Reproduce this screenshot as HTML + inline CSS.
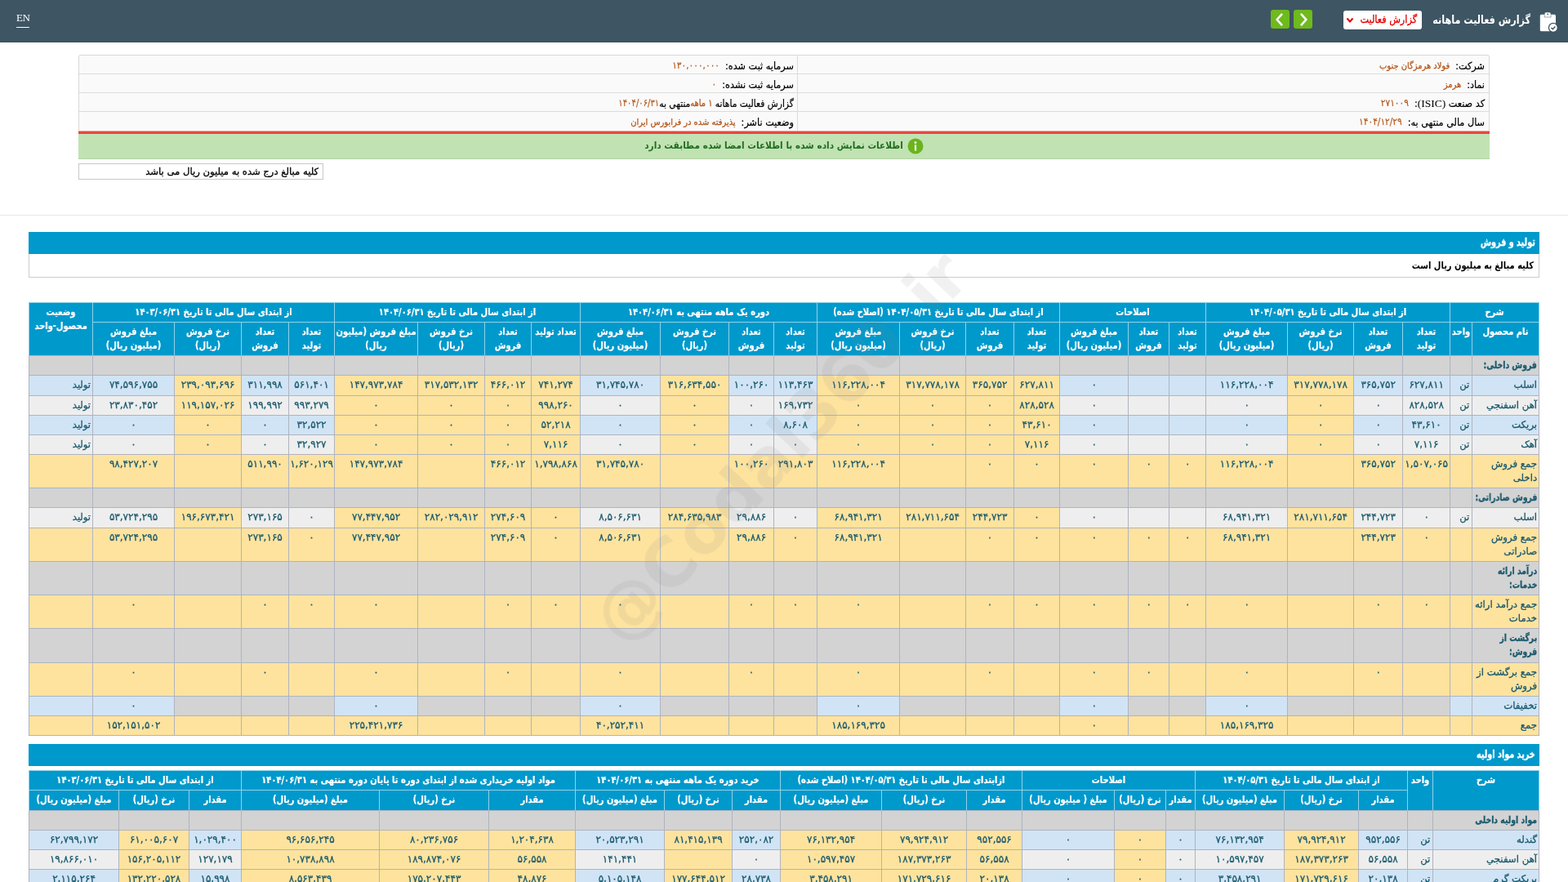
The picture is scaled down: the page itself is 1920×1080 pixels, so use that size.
<!DOCTYPE html>
<html lang="fa" dir="rtl">
<head>
<meta charset="utf-8">
<title>گزارش فعالیت ماهانه</title>
<style>
html,body{margin:0;padding:0;}
body{width:1920px;height:1080px;overflow:hidden;position:relative;background:#fff;
  font-family:"DejaVu Sans","Liberation Sans",sans-serif;font-size:12px;color:#000;direction:rtl;}
#page{position:absolute;left:0;top:0;width:1920px;height:1080px;overflow:hidden;will-change:transform;}
.hdr{position:absolute;left:0;top:0;width:1920px;height:52px;background:#3e5564;}
.en{position:absolute;left:20px;top:13px;width:16px;height:20px;border-bottom:1px solid #fff;color:#fff;
  font-family:"Liberation Serif",serif;font-size:13px;line-height:17px;direction:ltr;text-align:left;letter-spacing:-0.5px;}
.ttl{position:absolute;left:1752px;width:122px;text-align:right;top:11px;height:26px;line-height:26px;color:#fff;font-weight:bold;
  font-family:"DejaVu Sans Condensed","DejaVu Sans",sans-serif;font-size:14px;white-space:nowrap;transform:scaleX(0.89);transform-origin:right center;}
.ico{position:absolute;left:1884px;top:13px;width:26px;height:28px;}
.sel{position:absolute;left:1645px;top:13px;width:96px;height:23px;background:#fff;border-radius:3px;color:#e60000;
  font-family:"DejaVu Sans Condensed","DejaVu Sans",sans-serif;font-size:12.5px;line-height:22px;box-sizing:border-box;padding-right:6px;white-space:nowrap;-webkit-text-stroke:0.3px currentColor;}
.sel svg{position:absolute;left:3px;top:8px;}
.nav{position:absolute;top:12px;width:23px;height:23px;background:#6fba1c;border-radius:3px;}
.nav svg{position:absolute;left:0;top:0;}
.info{position:absolute;left:96px;top:67px;width:1728px;height:94px;box-sizing:border-box;border:1px solid #d9d9d9;border-bottom:0;
  border-radius:3px 3px 0 0;background:#fafafa;}
.info .r{position:absolute;left:0;width:1726px;height:23px;box-sizing:border-box;border-bottom:1px solid #dcdcdc;}
.info .c{position:absolute;top:2px;height:22px;line-height:22px;white-space:nowrap;font-family:"DejaVu Sans Condensed","DejaVu Sans",sans-serif;
  font-size:12.5px;color:#000;-webkit-text-stroke:0.2px currentColor;transform-origin:right center;}
.info .c1{right:5px;}
.info .c2{right:851px;}
.info .dv{position:absolute;left:879px;top:0;width:1px;height:93px;background:#dcdcdc;}
.info .v{color:#b3561a;font-size:11px;margin-right:7px;position:relative;top:-1px;-webkit-text-stroke:0.25px currentColor;}
.info .vd{font-size:11.75px;-webkit-text-stroke:0.15px currentColor;}
.info .lat{font-family:"Liberation Serif",serif;font-size:13.5px;-webkit-text-stroke:0;}
.red{position:absolute;left:96px;top:160px;width:1728px;height:4px;background:#e8473f;border-top:1px solid #f0a29d;box-sizing:border-box;}
.ok{position:absolute;left:96px;top:164px;width:1728px;height:31px;background:#c1e2b3;box-sizing:border-box;
  border-bottom:1px solid #b5d3a8;text-align:center;color:#1f6f1f;font-weight:bold;
  font-family:"DejaVu Sans Condensed","DejaVu Sans",sans-serif;font-size:11.75px;line-height:28px;white-space:nowrap;}
.note{position:absolute;left:96px;top:200px;width:300px;height:20px;box-sizing:border-box;border:1px solid #c8c8c8;
  background:#fff;font-size:11.6px;line-height:19px;padding-right:5px;white-space:nowrap;-webkit-text-stroke:0.3px currentColor;}
.hr{position:absolute;left:0;top:263px;width:1920px;height:1px;background:#e7e7e7;}
.bar{position:absolute;left:35px;width:1850px;height:27px;background:#0099cc;color:#fff;font-weight:bold;
  font-family:"DejaVu Sans Condensed","DejaVu Sans",sans-serif;font-size:13.4px;line-height:26px;box-sizing:border-box;
  padding-right:5px;white-space:nowrap;-webkit-text-stroke:0.3px currentColor;}
.sx{display:inline-block;transform-origin:right center;transform:scaleX(0.8);}
.sub .sx{transform:scaleX(0.915);}
.sub{position:absolute;left:35px;top:311px;width:1850px;height:29px;box-sizing:border-box;border:1px solid #ccc;border-top:0;
  background:#fff;font-weight:bold;font-family:"DejaVu Sans Condensed","DejaVu Sans",sans-serif;font-size:12px;
  line-height:28px;padding-right:6px;white-space:nowrap;}
table.rep{position:absolute;border-collapse:separate;border-spacing:0;table-layout:fixed;direction:rtl;
  border-bottom:1px solid #b0b3c0;}
table.rep .fr{border-right:1px solid #b0b3c0;}
table.rep th.fr{border-right-color:#8fd3ea;}
table.rep td,table.rep th{box-sizing:border-box;padding:3px 0 0 0;border-left:1px solid #b0b3c0;border-top:1px solid #b0b3c0;
  vertical-align:top;text-align:center;white-space:nowrap;overflow:hidden;line-height:17px;font-size:12px;color:#1b5a6e;
  font-weight:normal;-webkit-text-stroke:0.3px currentColor;}
table.rep th{background:#0099cc;color:#fff;font-weight:bold;border-color:#8fd3ea;
  font-family:"DejaVu Sans Condensed","DejaVu Sans",sans-serif;font-size:12px;-webkit-text-stroke:0.2px currentColor;}
.hx{display:block;margin:0 -30px;transform:scaleX(0.92);transform-origin:center center;}
.bx{display:inline-block;transform:scaleX(0.86);transform-origin:right center;}
table.rep td.n{text-align:right;padding-right:2px;font-size:11.75px;}
table.rep td.u{text-align:right;padding-right:3px;font-size:11.5px;}
table.rep td.s{text-align:right;padding-right:2px;font-size:11.5px;}
table.rep td.b{font-weight:bold;font-family:"DejaVu Sans Condensed","DejaVu Sans",sans-serif;font-size:12px;-webkit-text-stroke:0.3px currentColor;}
#t1 tr.r1 th{padding-top:3px;}
td.a{background:#d0e4f5;}
td.e{background:#eeeeee;}
td.y{background:#fee39e;}
td.g{background:#d3d3d3;}
.wm{position:absolute;left:956px;top:548px;white-space:nowrap;direction:ltr;pointer-events:none;line-height:1;
  transform:translate(-50%,-50%) rotate(-46.5deg);font-family:"DejaVu Sans","Liberation Sans",sans-serif;font-weight:bold;font-size:82px;
  color:rgba(128,128,128,0.115);}

</style>
</head>
<body>
<div id="page">
<div class="hdr">
  <div class="en">EN</div>
  <div class="nav" style="left:1556px"><svg width="23" height="23" viewBox="0 0 23 23"><path d="M13.4 5.6 L7.6 12 L13.4 18.4" fill="none" stroke="#fff" stroke-width="2.6" stroke-linecap="round" stroke-linejoin="round"/></svg></div>
  <div class="nav" style="left:1584px"><svg width="23" height="23" viewBox="0 0 23 23"><path d="M9.6 5.6 L15.4 12 L9.6 18.4" fill="none" stroke="#fff" stroke-width="2.6" stroke-linecap="round" stroke-linejoin="round"/></svg></div>
  <div class="sel">گزارش فعالیت<svg width="10" height="8" viewBox="0 0 10 8"><path d="M1.5 1.5 L5 5.5 L8.5 1.5" fill="none" stroke="#e60000" stroke-width="2"/></svg></div>
  <div class="ttl">گزارش فعالیت ماهانه</div>
  <svg class="ico" viewBox="0 0 26 28"><rect x="1.8" y="4.8" width="19.2" height="20.5" rx="1.6" fill="#fff"/><path d="M7.2 8V4.2a2.200 2.200 0 0 1 2.200-2.200h3.500a2.200 2.200 0 0 1 2.200 2.200V8z" fill="#fff" stroke="#3e5564" stroke-width="0.5"/><circle cx="11.15" cy="4.3" r="0.9" fill="#3e5564"/><circle cx="17.9" cy="20.9" r="6.1" fill="#3e5564"/><circle cx="17.900" cy="20.900" r="4.800" fill="#fff"/><path d="M15.500 21l1.800 1.700l3.100-3.300" fill="none" stroke="#3e5564" stroke-width="1.5"/></svg>
</div>
<div class="info">
<div class="r" style="top:0"><div class="c c1">شرکت:<span class="v">فولاد هرمزگان جنوب</span></div><div class="c c2">سرمایه ثبت شده:<span class="v vd">۱۳۰,۰۰۰,۰۰۰</span></div></div>
<div class="r" style="top:23px"><div class="c c1">نماد:<span class="v">هرمز</span></div><div class="c c2">سرمایه ثبت نشده:<span class="v vd">۰</span></div></div>
<div class="r" style="top:46px"><div class="c c1">کد صنعت <span class="lat">(ISIC)</span>:<span class="v vd">۲۷۱۰۰۹</span></div><div class="c c2" style="transform:scaleX(0.95)">گزارش فعالیت ماهانه <span class="v" style="margin:0;font-size:11.5px">۱ ماهه</span>&zwnj;منتهی به<span class="v vd" style="margin:0">۱۴۰۴/۰۶/۳۱</span></div></div>
<div class="r" style="top:69px;border-bottom:0"><div class="c c1">سال مالی منتهی به:<span class="v vd">۱۴۰۴/۱۲/۲۹</span></div><div class="c c2">وضعیت ناشر:<span class="v">پذیرفته شده در فرابورس ایران</span></div></div>
<div class="dv"></div>
</div>
<div class="red"></div>
<div class="ok"><svg width="20" height="20" viewBox="0 0 20 20" style="vertical-align:middle;margin-left:5px;position:relative;top:0px"><circle cx="10" cy="10" r="9.500" fill="#6ab41e"/><circle cx="10" cy="5.6" r="1.400" fill="#fff"/><rect x="8.9" y="8.200" width="2.2" height="7.4" rx="0.6" fill="#fff"/></svg>اطلاعات نمایش داده شده با اطلاعات امضا شده مطابقت دارد</div>
<div class="note">کلیه مبالغ درج شده به میلیون ریال می باشد</div>
<div class="hr"></div>
<div class="bar" style="top:284px"><span class="sx">تولید و فروش</span></div>
<div class="sub"><span class="sx">کلیه مبالغ به میلیون ریال است</span></div>

<table class="rep" id="t1" style="left:35px;top:370px;width:1850px">
<colgroup><col style="width:83px"><col style="width:27px"><col style="width:58px"><col style="width:60px"><col style="width:81px"><col style="width:100px"><col style="width:45px"><col style="width:50px"><col style="width:84px"><col style="width:56px"><col style="width:59px"><col style="width:81px"><col style="width:101px"><col style="width:53px"><col style="width:55px"><col style="width:84px"><col style="width:98px"><col style="width:60px"><col style="width:57px"><col style="width:82px"><col style="width:102px"><col style="width:56px"><col style="width:58px"><col style="width:82px"><col style="width:100px"><col style="width:78px"></colgroup>
<tr class="r0" style="height:24px">
<th colspan="2" class="fr"><span class="hx">شرح</span></th>
<th colspan="4"><span class="hx">از ابتدای سال مالی تا تاریخ ۱۴۰۴/۰۵/۳۱</span></th>
<th colspan="3"><span class="hx">اصلاحات</span></th>
<th colspan="4"><span class="hx">از ابتدای سال مالی تا تاریخ ۱۴۰۴/۰۵/۳۱ (اصلاح شده)</span></th>
<th colspan="4"><span class="hx">دوره یک ماهه منتهی به ۱۴۰۴/۰۶/۳۱</span></th>
<th colspan="4"><span class="hx">از ابتدای سال مالی تا تاریخ ۱۴۰۴/۰۶/۳۱</span></th>
<th colspan="4"><span class="hx">از ابتدای سال مالی تا تاریخ ۱۴۰۳/۰۶/۳۱</span></th>
<th rowspan="2"><span class="hx">وضعیت<br>محصول-واحد</span></th>
</tr>
<tr class="r1" style="height:41px">
<th class="fr"><span class="hx">نام محصول</span></th>
<th><span class="hx">واحد</span></th>
<th><span class="hx">تعداد<br>تولید</span></th>
<th><span class="hx">تعداد<br>فروش</span></th>
<th><span class="hx">نرخ فروش<br>(ریال)</span></th>
<th><span class="hx">مبلغ فروش<br>(میلیون ریال)</span></th>
<th><span class="hx">تعداد<br>تولید</span></th>
<th><span class="hx">تعداد<br>فروش</span></th>
<th><span class="hx">مبلغ فروش<br>(میلیون ریال)</span></th>
<th><span class="hx">تعداد<br>تولید</span></th>
<th><span class="hx">تعداد<br>فروش</span></th>
<th><span class="hx">نرخ فروش<br>(ریال)</span></th>
<th><span class="hx">مبلغ فروش<br>(میلیون ریال)</span></th>
<th><span class="hx">تعداد<br>تولید</span></th>
<th><span class="hx">تعداد<br>فروش</span></th>
<th><span class="hx">نرخ فروش<br>(ریال)</span></th>
<th><span class="hx">مبلغ فروش<br>(میلیون ریال)</span></th>
<th><span class="hx">تعداد تولید</span></th>
<th><span class="hx">تعداد<br>فروش</span></th>
<th><span class="hx">نرخ فروش<br>(ریال)</span></th>
<th><span class="hx">مبلغ فروش (میلیون<br>ریال)</span></th>
<th><span class="hx">تعداد<br>تولید</span></th>
<th><span class="hx">تعداد<br>فروش</span></th>
<th><span class="hx">نرخ فروش<br>(ریال)</span></th>
<th><span class="hx">مبلغ فروش<br>(میلیون ریال)</span></th>
</tr>
<tr class="r2" style="height:24px">
<td class="g n b fr"><span class="bx">فروش داخلی:</span></td>
<td class="g"></td>
<td class="g"></td>
<td class="g"></td>
<td class="g"></td>
<td class="g"></td>
<td class="g"></td>
<td class="g"></td>
<td class="g"></td>
<td class="g"></td>
<td class="g"></td>
<td class="g"></td>
<td class="g"></td>
<td class="g"></td>
<td class="g"></td>
<td class="g"></td>
<td class="g"></td>
<td class="g"></td>
<td class="g"></td>
<td class="g"></td>
<td class="g"></td>
<td class="g"></td>
<td class="g"></td>
<td class="g"></td>
<td class="g"></td>
<td class="g"></td>
</tr>
<tr class="r3" style="height:25px">
<td class="a n fr">اسلب</td>
<td class="a u">تن</td>
<td class="a">۶۲۷,۸۱۱</td>
<td class="a">۳۶۵,۷۵۲</td>
<td class="y">۳۱۷,۷۷۸,۱۷۸</td>
<td class="a">۱۱۶,۲۲۸,۰۰۴</td>
<td class="a"></td>
<td class="a"></td>
<td class="a">۰</td>
<td class="y">۶۲۷,۸۱۱</td>
<td class="y">۳۶۵,۷۵۲</td>
<td class="y">۳۱۷,۷۷۸,۱۷۸</td>
<td class="y">۱۱۶,۲۲۸,۰۰۴</td>
<td class="a">۱۱۳,۴۶۳</td>
<td class="a">۱۰۰,۲۶۰</td>
<td class="y">۳۱۶,۶۳۴,۵۵۰</td>
<td class="a">۳۱,۷۴۵,۷۸۰</td>
<td class="y">۷۴۱,۲۷۴</td>
<td class="y">۴۶۶,۰۱۲</td>
<td class="y">۳۱۷,۵۳۲,۱۳۲</td>
<td class="y">۱۴۷,۹۷۳,۷۸۴</td>
<td class="a">۵۶۱,۴۰۱</td>
<td class="a">۳۱۱,۹۹۸</td>
<td class="y">۲۳۹,۰۹۳,۶۹۶</td>
<td class="a">۷۴,۵۹۶,۷۵۵</td>
<td class="a s">تولید</td>
</tr>
<tr class="r4" style="height:24px">
<td class="e n fr">آهن اسفنجي</td>
<td class="e u">تن</td>
<td class="e">۸۲۸,۵۲۸</td>
<td class="e">۰</td>
<td class="y">۰</td>
<td class="e">۰</td>
<td class="e"></td>
<td class="e"></td>
<td class="e">۰</td>
<td class="y">۸۲۸,۵۲۸</td>
<td class="y">۰</td>
<td class="y">۰</td>
<td class="y">۰</td>
<td class="e">۱۶۹,۷۳۲</td>
<td class="e">۰</td>
<td class="y">۰</td>
<td class="e">۰</td>
<td class="y">۹۹۸,۲۶۰</td>
<td class="y">۰</td>
<td class="y">۰</td>
<td class="y">۰</td>
<td class="e">۹۹۳,۲۷۹</td>
<td class="e">۱۹۹,۹۹۲</td>
<td class="y">۱۱۹,۱۵۷,۰۲۶</td>
<td class="e">۲۳,۸۳۰,۴۵۲</td>
<td class="e s">تولید</td>
</tr>
<tr class="r5" style="height:24px">
<td class="a n fr">بریکت</td>
<td class="a u">تن</td>
<td class="a">۴۳,۶۱۰</td>
<td class="a">۰</td>
<td class="y">۰</td>
<td class="a">۰</td>
<td class="a"></td>
<td class="a"></td>
<td class="a">۰</td>
<td class="y">۴۳,۶۱۰</td>
<td class="y">۰</td>
<td class="y">۰</td>
<td class="y">۰</td>
<td class="a">۸,۶۰۸</td>
<td class="a">۰</td>
<td class="y">۰</td>
<td class="a">۰</td>
<td class="y">۵۲,۲۱۸</td>
<td class="y">۰</td>
<td class="y">۰</td>
<td class="y">۰</td>
<td class="a">۳۲,۵۲۲</td>
<td class="a">۰</td>
<td class="y">۰</td>
<td class="a">۰</td>
<td class="a s">تولید</td>
</tr>
<tr class="r6" style="height:24px">
<td class="e n fr">آهک</td>
<td class="e u">تن</td>
<td class="e">۷,۱۱۶</td>
<td class="e">۰</td>
<td class="y">۰</td>
<td class="e">۰</td>
<td class="e"></td>
<td class="e"></td>
<td class="e">۰</td>
<td class="y">۷,۱۱۶</td>
<td class="y">۰</td>
<td class="y">۰</td>
<td class="y">۰</td>
<td class="e">۰</td>
<td class="e">۰</td>
<td class="y">۰</td>
<td class="e">۰</td>
<td class="y">۷,۱۱۶</td>
<td class="y">۰</td>
<td class="y">۰</td>
<td class="y">۰</td>
<td class="e">۳۲,۹۲۷</td>
<td class="e">۰</td>
<td class="y">۰</td>
<td class="e">۰</td>
<td class="e s">تولید</td>
</tr>
<tr class="r7" style="height:41px">
<td class="y n fr">جمع فروش<br>داخلی</td>
<td class="y"></td>
<td class="y">۱,۵۰۷,۰۶۵</td>
<td class="y">۳۶۵,۷۵۲</td>
<td class="y"></td>
<td class="y">۱۱۶,۲۲۸,۰۰۴</td>
<td class="y">۰</td>
<td class="y">۰</td>
<td class="y">۰</td>
<td class="y">۰</td>
<td class="y">۰</td>
<td class="y"></td>
<td class="y">۱۱۶,۲۲۸,۰۰۴</td>
<td class="y">۲۹۱,۸۰۳</td>
<td class="y">۱۰۰,۲۶۰</td>
<td class="y"></td>
<td class="y">۳۱,۷۴۵,۷۸۰</td>
<td class="y">۱,۷۹۸,۸۶۸</td>
<td class="y">۴۶۶,۰۱۲</td>
<td class="y"></td>
<td class="y">۱۴۷,۹۷۳,۷۸۴</td>
<td class="y">۱,۶۲۰,۱۲۹</td>
<td class="y">۵۱۱,۹۹۰</td>
<td class="y"></td>
<td class="y">۹۸,۴۲۷,۲۰۷</td>
<td class="y"></td>
</tr>
<tr class="r8" style="height:24px">
<td class="g n b fr"><span class="bx">فروش صادراتی:</span></td>
<td class="g"></td>
<td class="g"></td>
<td class="g"></td>
<td class="g"></td>
<td class="g"></td>
<td class="g"></td>
<td class="g"></td>
<td class="g"></td>
<td class="g"></td>
<td class="g"></td>
<td class="g"></td>
<td class="g"></td>
<td class="g"></td>
<td class="g"></td>
<td class="g"></td>
<td class="g"></td>
<td class="g"></td>
<td class="g"></td>
<td class="g"></td>
<td class="g"></td>
<td class="g"></td>
<td class="g"></td>
<td class="g"></td>
<td class="g"></td>
<td class="g"></td>
</tr>
<tr class="r9" style="height:25px">
<td class="e n fr">اسلب</td>
<td class="e u">تن</td>
<td class="e">۰</td>
<td class="e">۲۴۴,۷۲۳</td>
<td class="y">۲۸۱,۷۱۱,۶۵۴</td>
<td class="e">۶۸,۹۴۱,۳۲۱</td>
<td class="e"></td>
<td class="e"></td>
<td class="e">۰</td>
<td class="y">۰</td>
<td class="y">۲۴۴,۷۲۳</td>
<td class="y">۲۸۱,۷۱۱,۶۵۴</td>
<td class="y">۶۸,۹۴۱,۳۲۱</td>
<td class="e">۰</td>
<td class="e">۲۹,۸۸۶</td>
<td class="y">۲۸۴,۶۳۵,۹۸۳</td>
<td class="e">۸,۵۰۶,۶۳۱</td>
<td class="y">۰</td>
<td class="y">۲۷۴,۶۰۹</td>
<td class="y">۲۸۲,۰۲۹,۹۱۲</td>
<td class="y">۷۷,۴۴۷,۹۵۲</td>
<td class="e">۰</td>
<td class="e">۲۷۳,۱۶۵</td>
<td class="y">۱۹۶,۶۷۳,۴۲۱</td>
<td class="e">۵۳,۷۲۴,۲۹۵</td>
<td class="e s">تولید</td>
</tr>
<tr class="r10" style="height:41px">
<td class="y n fr">جمع فروش<br>صادراتی</td>
<td class="y"></td>
<td class="y">۰</td>
<td class="y">۲۴۴,۷۲۳</td>
<td class="y"></td>
<td class="y">۶۸,۹۴۱,۳۲۱</td>
<td class="y">۰</td>
<td class="y">۰</td>
<td class="y">۰</td>
<td class="y">۰</td>
<td class="y">۰</td>
<td class="y"></td>
<td class="y">۶۸,۹۴۱,۳۲۱</td>
<td class="y">۰</td>
<td class="y">۲۹,۸۸۶</td>
<td class="y"></td>
<td class="y">۸,۵۰۶,۶۳۱</td>
<td class="y">۰</td>
<td class="y">۲۷۴,۶۰۹</td>
<td class="y"></td>
<td class="y">۷۷,۴۴۷,۹۵۲</td>
<td class="y">۰</td>
<td class="y">۲۷۳,۱۶۵</td>
<td class="y"></td>
<td class="y">۵۳,۷۲۴,۲۹۵</td>
<td class="y"></td>
</tr>
<tr class="r11" style="height:41px">
<td class="g n b fr"><span class="bx">درآمد ارائه<br>خدمات:</span></td>
<td class="g"></td>
<td class="g"></td>
<td class="g"></td>
<td class="g"></td>
<td class="g"></td>
<td class="g"></td>
<td class="g"></td>
<td class="g"></td>
<td class="g"></td>
<td class="g"></td>
<td class="g"></td>
<td class="g"></td>
<td class="g"></td>
<td class="g"></td>
<td class="g"></td>
<td class="g"></td>
<td class="g"></td>
<td class="g"></td>
<td class="g"></td>
<td class="g"></td>
<td class="g"></td>
<td class="g"></td>
<td class="g"></td>
<td class="g"></td>
<td class="g"></td>
</tr>
<tr class="r12" style="height:41px">
<td class="y n fr">جمع درآمد ارائه<br>خدمات</td>
<td class="y"></td>
<td class="y">۰</td>
<td class="y">۰</td>
<td class="y"></td>
<td class="y">۰</td>
<td class="y">۰</td>
<td class="y">۰</td>
<td class="y">۰</td>
<td class="y">۰</td>
<td class="y">۰</td>
<td class="y"></td>
<td class="y">۰</td>
<td class="y">۰</td>
<td class="y">۰</td>
<td class="y"></td>
<td class="y">۰</td>
<td class="y">۰</td>
<td class="y">۰</td>
<td class="y"></td>
<td class="y">۰</td>
<td class="y">۰</td>
<td class="y">۰</td>
<td class="y"></td>
<td class="y">۰</td>
<td class="y"></td>
</tr>
<tr class="r13" style="height:42px">
<td class="g n b fr"><span class="bx">برگشت از<br>فروش:</span></td>
<td class="g"></td>
<td class="g"></td>
<td class="g"></td>
<td class="g"></td>
<td class="g"></td>
<td class="g"></td>
<td class="g"></td>
<td class="g"></td>
<td class="g"></td>
<td class="g"></td>
<td class="g"></td>
<td class="g"></td>
<td class="g"></td>
<td class="g"></td>
<td class="g"></td>
<td class="g"></td>
<td class="g"></td>
<td class="g"></td>
<td class="g"></td>
<td class="g"></td>
<td class="g"></td>
<td class="g"></td>
<td class="g"></td>
<td class="g"></td>
<td class="g"></td>
</tr>
<tr class="r14" style="height:41px">
<td class="y n fr">جمع برگشت از<br>فروش</td>
<td class="y"></td>
<td class="y"></td>
<td class="y">۰</td>
<td class="y"></td>
<td class="y">۰</td>
<td class="y"></td>
<td class="y">۰</td>
<td class="y">۰</td>
<td class="y"></td>
<td class="y">۰</td>
<td class="y"></td>
<td class="y">۰</td>
<td class="y"></td>
<td class="y">۰</td>
<td class="y"></td>
<td class="y">۰</td>
<td class="y"></td>
<td class="y">۰</td>
<td class="y"></td>
<td class="y">۰</td>
<td class="y"></td>
<td class="y">۰</td>
<td class="y"></td>
<td class="y">۰</td>
<td class="y"></td>
</tr>
<tr class="r15" style="height:24px">
<td class="a n fr">تخفیفات</td>
<td class="a"></td>
<td class="g"></td>
<td class="g"></td>
<td class="g"></td>
<td class="a">۰</td>
<td class="g"></td>
<td class="g"></td>
<td class="a">۰</td>
<td class="g"></td>
<td class="g"></td>
<td class="g"></td>
<td class="a">۰</td>
<td class="g"></td>
<td class="g"></td>
<td class="g"></td>
<td class="a">۰</td>
<td class="g"></td>
<td class="g"></td>
<td class="g"></td>
<td class="a">۰</td>
<td class="g"></td>
<td class="g"></td>
<td class="g"></td>
<td class="a">۰</td>
<td class="a"></td>
</tr>
<tr class="r16" style="height:24px">
<td class="y n fr">جمع</td>
<td class="y"></td>
<td class="y"></td>
<td class="y"></td>
<td class="y"></td>
<td class="y">۱۸۵,۱۶۹,۳۲۵</td>
<td class="y"></td>
<td class="y"></td>
<td class="y">۰</td>
<td class="y"></td>
<td class="y"></td>
<td class="y"></td>
<td class="y">۱۸۵,۱۶۹,۳۲۵</td>
<td class="y"></td>
<td class="y"></td>
<td class="y"></td>
<td class="y">۴۰,۲۵۲,۴۱۱</td>
<td class="y"></td>
<td class="y"></td>
<td class="y"></td>
<td class="y">۲۲۵,۴۲۱,۷۳۶</td>
<td class="y"></td>
<td class="y"></td>
<td class="y"></td>
<td class="y">۱۵۲,۱۵۱,۵۰۲</td>
<td class="y"></td>
</tr>
</table>
<div class="bar" style="top:911px"><span class="sx">خرید مواد اولیه</span></div>
<table class="rep" id="t2" style="left:35px;top:943px;width:1850px">
<colgroup><col style="width:131px"><col style="width:31px"><col style="width:60px"><col style="width:91px"><col style="width:109px"><col style="width:36px"><col style="width:63px"><col style="width:113px"><col style="width:68px"><col style="width:104px"><col style="width:124px"><col style="width:59px"><col style="width:83px"><col style="width:109px"><col style="width:106px"><col style="width:134px"><col style="width:169px"><col style="width:64px"><col style="width:86px"><col style="width:110px"></colgroup>
<tr class="r0" style="height:24px">
<th rowspan="2" class="fr"><span class="hx">شرح</span></th>
<th rowspan="2"><span class="hx">واحد</span></th>
<th colspan="3"><span class="hx">از ابتدای سال مالی تا تاریخ ۱۴۰۴/۰۵/۳۱</span></th>
<th colspan="3"><span class="hx">اصلاحات</span></th>
<th colspan="3"><span class="hx">ازابتدای سال مالی تا تاریخ ۱۴۰۴/۰۵/۳۱ (اصلاح شده)</span></th>
<th colspan="3"><span class="hx">خرید دوره یک ماهه منتهی به ۱۴۰۴/۰۶/۳۱</span></th>
<th colspan="3"><span class="hx">مواد اولیه خریداری شده از ابتدای دوره تا پایان دوره منتهی به ۱۴۰۴/۰۶/۳۱</span></th>
<th colspan="3"><span class="hx">از ابتدای سال مالی تا تاریخ ۱۴۰۳/۰۶/۳۱</span></th>
</tr>
<tr class="r1" style="height:25px">
<th><span class="hx">مقدار</span></th>
<th><span class="hx">نرخ (ریال)</span></th>
<th><span class="hx">مبلغ (میلیون ریال)</span></th>
<th><span class="hx">مقدار</span></th>
<th><span class="hx">نرخ (ریال)</span></th>
<th><span class="hx">مبلغ ( میلیون ریال)</span></th>
<th><span class="hx">مقدار</span></th>
<th><span class="hx">نرخ (ریال)</span></th>
<th><span class="hx">مبلغ (میلیون ریال)</span></th>
<th><span class="hx">مقدار</span></th>
<th><span class="hx">نرخ (ریال)</span></th>
<th><span class="hx">مبلغ (میلیون ریال)</span></th>
<th><span class="hx">مقدار</span></th>
<th><span class="hx">نرخ (ریال)</span></th>
<th><span class="hx">مبلغ (میلیون ریال)</span></th>
<th><span class="hx">مقدار</span></th>
<th><span class="hx">نرخ (ریال)</span></th>
<th><span class="hx">مبلغ (میلیون ریال)</span></th>
</tr>
<tr class="r2" style="height:24px">
<td class="g n b fr"><span class="bx">مواد اولیه داخلی</span></td>
<td class="g"></td>
<td class="g"></td>
<td class="g"></td>
<td class="g"></td>
<td class="g"></td>
<td class="g"></td>
<td class="g"></td>
<td class="g"></td>
<td class="g"></td>
<td class="g"></td>
<td class="g"></td>
<td class="g"></td>
<td class="g"></td>
<td class="g"></td>
<td class="g"></td>
<td class="g"></td>
<td class="g"></td>
<td class="g"></td>
<td class="g"></td>
</tr>
<tr class="r3" style="height:24px">
<td class="a n fr">گندله</td>
<td class="a u">تن</td>
<td class="a">۹۵۲,۵۵۶</td>
<td class="y">۷۹,۹۲۴,۹۱۲</td>
<td class="a">۷۶,۱۳۲,۹۵۴</td>
<td class="a">۰</td>
<td class="y">۰</td>
<td class="a">۰</td>
<td class="y">۹۵۲,۵۵۶</td>
<td class="y">۷۹,۹۲۴,۹۱۲</td>
<td class="y">۷۶,۱۳۲,۹۵۴</td>
<td class="a">۲۵۲,۰۸۲</td>
<td class="y">۸۱,۴۱۵,۱۳۹</td>
<td class="a">۲۰,۵۲۳,۲۹۱</td>
<td class="y">۱,۲۰۴,۶۳۸</td>
<td class="y">۸۰,۲۳۶,۷۵۶</td>
<td class="y">۹۶,۶۵۶,۲۴۵</td>
<td class="a">۱,۰۲۹,۴۰۰</td>
<td class="y">۶۱,۰۰۵,۶۰۷</td>
<td class="a">۶۲,۷۹۹,۱۷۲</td>
</tr>
<tr class="r4" style="height:24px">
<td class="e n fr">آهن اسفنجي</td>
<td class="e u">تن</td>
<td class="e">۵۶,۵۵۸</td>
<td class="y">۱۸۷,۳۷۳,۲۶۳</td>
<td class="e">۱۰,۵۹۷,۴۵۷</td>
<td class="e">۰</td>
<td class="y">۰</td>
<td class="e">۰</td>
<td class="y">۵۶,۵۵۸</td>
<td class="y">۱۸۷,۳۷۳,۲۶۳</td>
<td class="y">۱۰,۵۹۷,۴۵۷</td>
<td class="e">۰</td>
<td class="y"></td>
<td class="e">۱۴۱,۴۴۱</td>
<td class="y">۵۶,۵۵۸</td>
<td class="y">۱۸۹,۸۷۴,۰۷۶</td>
<td class="y">۱۰,۷۳۸,۸۹۸</td>
<td class="e">۱۲۷,۱۷۹</td>
<td class="y">۱۵۶,۲۰۵,۱۱۲</td>
<td class="e">۱۹,۸۶۶,۰۱۰</td>
</tr>
<tr class="r5" style="height:25px">
<td class="a n fr">بریکت گرم</td>
<td class="a u">تن</td>
<td class="a">۲۰,۱۳۸</td>
<td class="y">۱۷۱,۷۲۹,۶۱۶</td>
<td class="a">۳,۴۵۸,۲۹۱</td>
<td class="a">۰</td>
<td class="y">۰</td>
<td class="a">۰</td>
<td class="y">۲۰,۱۳۸</td>
<td class="y">۱۷۱,۷۲۹,۶۱۶</td>
<td class="y">۳,۴۵۸,۲۹۱</td>
<td class="a">۲۸,۷۳۸</td>
<td class="y">۱۷۷,۶۴۴,۵۱۲</td>
<td class="a">۵,۱۰۵,۱۴۸</td>
<td class="y">۴۸,۸۷۶</td>
<td class="y">۱۷۵,۲۰۷,۴۴۳</td>
<td class="y">۸,۵۶۳,۴۳۹</td>
<td class="a">۱۵,۹۹۸</td>
<td class="y">۱۳۲,۲۲۰,۵۲۸</td>
<td class="a">۲,۱۱۵,۲۶۴</td>
</tr>
</table>
<div class="wm">@Codal360_ir</div>
</div>
</body>
</html>
